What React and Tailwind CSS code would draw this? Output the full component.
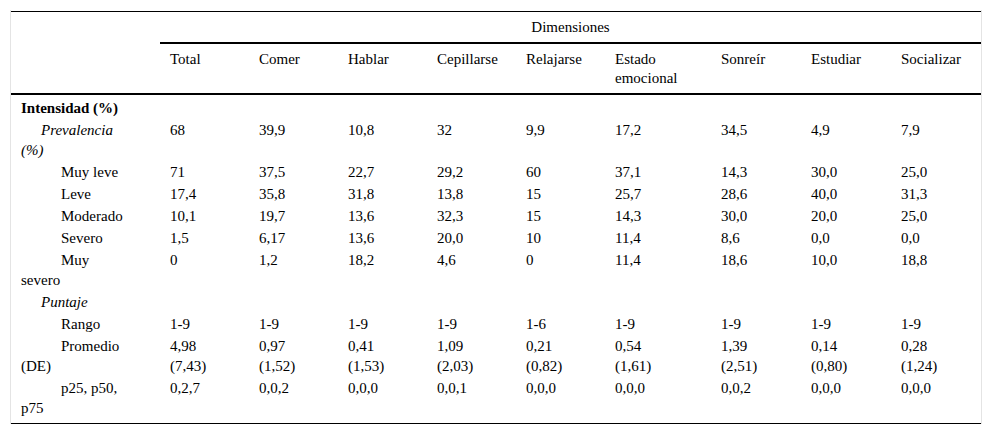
import React from "react";

const cols = [
  { name: "Total", w: "w-[89px]" },
  { name: "Comer", w: "w-[89px]" },
  { name: "Hablar", w: "w-[89px]" },
  { name: "Cepillarse", w: "w-[89px]" },
  { name: "Relajarse", w: "w-[89px]" },
  { name: "Estado emocional", w: "w-[106px]" },
  { name: "Sonreír", w: "w-[90px]" },
  { name: "Estudiar", w: "w-[90px]" },
  { name: "Socializar", w: "w-[90px]" },
];

const rows = [
  { label: "Intensidad (%)", kind: "head", values: [] },
  {
    label: "Prevalencia (%)",
    kind: "sub",
    values: ["68", "39,9", "10,8", "32", "9,9", "17,2", "34,5", "4,9", "7,9"],
  },
  { label: "Muy leve", values: ["71", "37,5", "22,7", "29,2", "60", "37,1", "14,3", "30,0", "25,0"] },
  { label: "Leve", values: ["17,4", "35,8", "31,8", "13,8", "15", "25,7", "28,6", "40,0", "31,3"] },
  { label: "Moderado", values: ["10,1", "19,7", "13,6", "32,3", "15", "14,3", "30,0", "20,0", "25,0"] },
  { label: "Severo", values: ["1,5", "6,17", "13,6", "20,0", "10", "11,4", "8,6", "0,0", "0,0"] },
  { label: "Muy severo", values: ["0", "1,2", "18,2", "4,6", "0", "11,4", "18,6", "10,0", "18,8"] },
  { label: "Puntaje", kind: "sub", values: [] },
  { label: "Rango", values: ["1-9", "1-9", "1-9", "1-9", "1-6", "1-9", "1-9", "1-9", "1-9"] },
  {
    label: "Promedio (DE)",
    values: [
      ["4,98", "(7,43)"],
      ["0,97", "(1,52)"],
      ["0,41", "(1,53)"],
      ["1,09", "(2,03)"],
      ["0,21", "(0,82)"],
      ["0,54", "(1,61)"],
      ["1,39", "(2,51)"],
      ["0,14", "(0,80)"],
      ["0,28", "(1,24)"],
    ],
  },
  {
    label: "p25, p50, p75",
    last: true,
    values: ["0,2,7", "0,0,2", "0,0,0", "0,0,1", "0,0,0", "0,0,0", "0,0,2", "0,0,0", "0,0,0"],
  },
];

const Cell = ({ value }) =>
  Array.isArray(value) ? (
    <>
      {value[0]}
      <br />
      {value[1]}
    </>
  ) : (
    value
  );

const App = () => {
  return (
    <div className="min-h-screen bg-white pt-[10px] px-[10px] [font-family:'Liberation_Serif',serif] text-[15px] text-black">
      <div className="w-[972px] border-x border-[#e4e4e4] pt-px">
        <table className="w-[970px] table-fixed border-separate border-spacing-0 border-t border-b border-black [font-family:'Liberation_Serif',serif]">
          <colgroup>
            <col className="w-[149px]" />
            {cols.map((c) => (
              <col key={c.name} className={c.w} />
            ))}
          </colgroup>
          <thead>
            <tr>
              <th rowSpan={2} className="border-b-2 border-black" />
              <th
                colSpan={9}
                className="border-b-2 border-black px-[10px] pt-[5px] pb-[5px] text-center font-normal leading-[20px]"
              >
                Dimensiones
              </th>
            </tr>
            <tr>
              {cols.map((c) => (
                <th
                  key={c.name}
                  className="h-[50px] border-b-2 border-black pl-[10px] pr-[8px] pt-[6px] pb-[5px] text-left align-top font-normal leading-[19px]"
                >
                  {c.name}
                </th>
              ))}
            </tr>
          </thead>
          <tbody>
            {rows.map((r) => {
              const pad =
                r.kind === "head" ? "pt-[3px] pb-px" : r.last ? "pt-px pb-[5px]" : "py-px";
              return (
                <tr key={r.label} className="align-top leading-[20px]">
                  <td
                    className={
                      r.kind === "head"
                        ? `pl-[10px] pr-[30px] font-bold ${pad}`
                        : r.kind === "sub"
                        ? `pl-[10px] pr-[30px] italic indent-[20px] ${pad}`
                        : `pl-[10px] pr-[30px] indent-[40px] ${pad}`
                    }
                  >
                    {r.label}
                  </td>
                  {cols.map((c, i) => (
                    <td key={c.name} className={`pl-[10px] pr-[6px] ${pad}`}>
                      {r.values[i] !== undefined ? <Cell value={r.values[i]} /> : null}
                    </td>
                  ))}
                </tr>
              );
            })}
          </tbody>
        </table>
      </div>
    </div>
  );
};

export default App;
